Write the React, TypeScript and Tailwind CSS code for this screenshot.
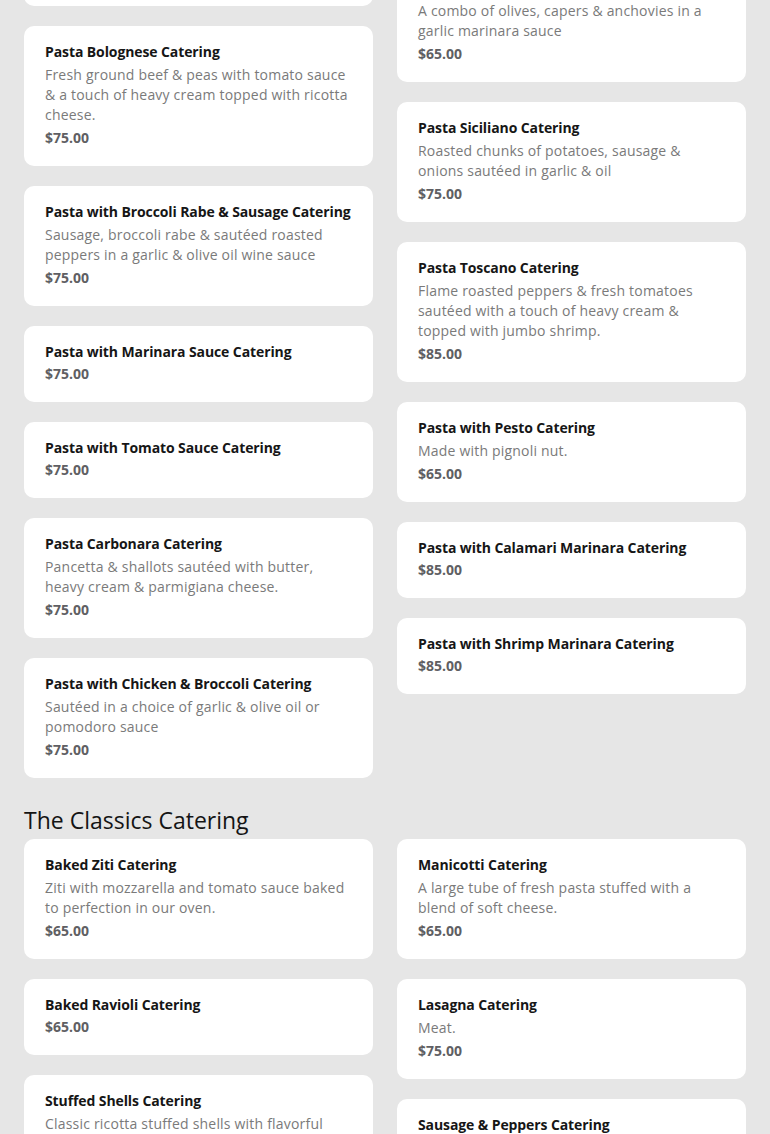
type Item = { name: string; desc?: string; price: string };

const pastaLeft: Item[] = [
  {
    name: "Pasta Primavera Catering",
    desc: "Fresh seasonal vegetables & cherry tomatoes sautéed in garlic & olive oil with a touch of white wine & parmigiana.",
    price: "$75.00",
  },
  {
    name: "Pasta Bolognese Catering",
    desc: "Fresh ground beef & peas with tomato sauce & a touch of heavy cream topped with ricotta cheese.",
    price: "$75.00",
  },
  {
    name: "Pasta with Broccoli Rabe & Sausage Catering",
    desc: "Sausage, broccoli rabe & sautéed roasted peppers in a garlic & olive oil wine sauce",
    price: "$75.00",
  },
  { name: "Pasta with Marinara Sauce Catering", price: "$75.00" },
  { name: "Pasta with Tomato Sauce Catering", price: "$75.00" },
  {
    name: "Pasta Carbonara Catering",
    desc: "Pancetta & shallots sautéed with butter, heavy cream & parmigiana cheese.",
    price: "$75.00",
  },
  {
    name: "Pasta with Chicken & Broccoli Catering",
    desc: "Sautéed in a choice of garlic & olive oil or pomodoro sauce",
    price: "$75.00",
  },
];

const pastaRight: Item[] = [
  { name: "Pasta Aglio e Olio Catering", price: "$65.00" },
  {
    name: "Pasta Puttanesca Catering",
    desc: "A combo of olives, capers & anchovies in a garlic marinara sauce",
    price: "$65.00",
  },
  {
    name: "Pasta Siciliano Catering",
    desc: "Roasted chunks of potatoes, sausage & onions sautéed in garlic & oil",
    price: "$75.00",
  },
  {
    name: "Pasta Toscano Catering",
    desc: "Flame roasted peppers & fresh tomatoes sautéed with a touch of heavy cream & topped with jumbo shrimp.",
    price: "$85.00",
  },
  { name: "Pasta with Pesto Catering", desc: "Made with pignoli nut.", price: "$65.00" },
  { name: "Pasta with Calamari Marinara Catering", price: "$85.00" },
  { name: "Pasta with Shrimp Marinara Catering", price: "$85.00" },
];

const classicsLeft: Item[] = [
  {
    name: "Baked Ziti Catering",
    desc: "Ziti with mozzarella and tomato sauce baked to perfection in our oven.",
    price: "$65.00",
  },
  { name: "Baked Ravioli Catering", price: "$65.00" },
  {
    name: "Stuffed Shells Catering",
    desc: "Classic ricotta stuffed shells with flavorful marinara sauce and melted mozzarella.",
    price: "$65.00",
  },
];

const classicsRight: Item[] = [
  {
    name: "Manicotti Catering",
    desc: "A large tube of fresh pasta stuffed with a blend of soft cheese.",
    price: "$65.00",
  },
  { name: "Lasagna Catering", desc: "Meat.", price: "$75.00" },
  {
    name: "Sausage & Peppers Catering",
    desc: "Sweet Italian sausage sautéed with peppers & onions in a light marinara.",
    price: "$75.00",
  },
];

function Card({ item }: { item: Item }) {
  return (
    <div className="flex flex-col rounded-[10px] bg-white px-[21px] pb-[18px] pt-4">
      <h3 className="-mr-3 text-[14px] font-bold leading-5 tracking-[-0.1px] text-[#161616]">
        {item.name}
      </h3>
      {item.desc && (
        <p className="mb-px mt-[3px] text-[14px] leading-5 tracking-[0.2px] text-[#7a7a7a]">
          {item.desc}
        </p>
      )}
      <p className="mt-[2px] text-[14px] font-bold leading-5 text-[#5f5f63]">{item.price}</p>
    </div>
  );
}

function Section({ left, right }: { left: Item[]; right: Item[] }) {
  return (
    <div className="flex items-start gap-6">
      <div className="flex flex-1 flex-col gap-5">
        {left.map((item) => (
          <Card key={item.name} item={item} />
        ))}
      </div>
      <div className="flex flex-1 flex-col gap-5">
        {right.map((item) => (
          <Card key={item.name} item={item} />
        ))}
      </div>
    </div>
  );
}

export default function App() {
  return (
    <div
      className="h-[1134px] overflow-hidden bg-[#e6e6e6] px-6"
      style={{ fontFamily: '"Open Sans", "Noto Sans", sans-serif' }}
    >
      <div className="-mt-[134px]">
        <Section left={pastaLeft} right={pastaRight} />
        <h2 className="mb-[3px] mt-[26px] text-[23px] leading-8 text-[#141414]">
          The Classics Catering
        </h2>
        <Section left={classicsLeft} right={classicsRight} />
      </div>
    </div>
  );
}
